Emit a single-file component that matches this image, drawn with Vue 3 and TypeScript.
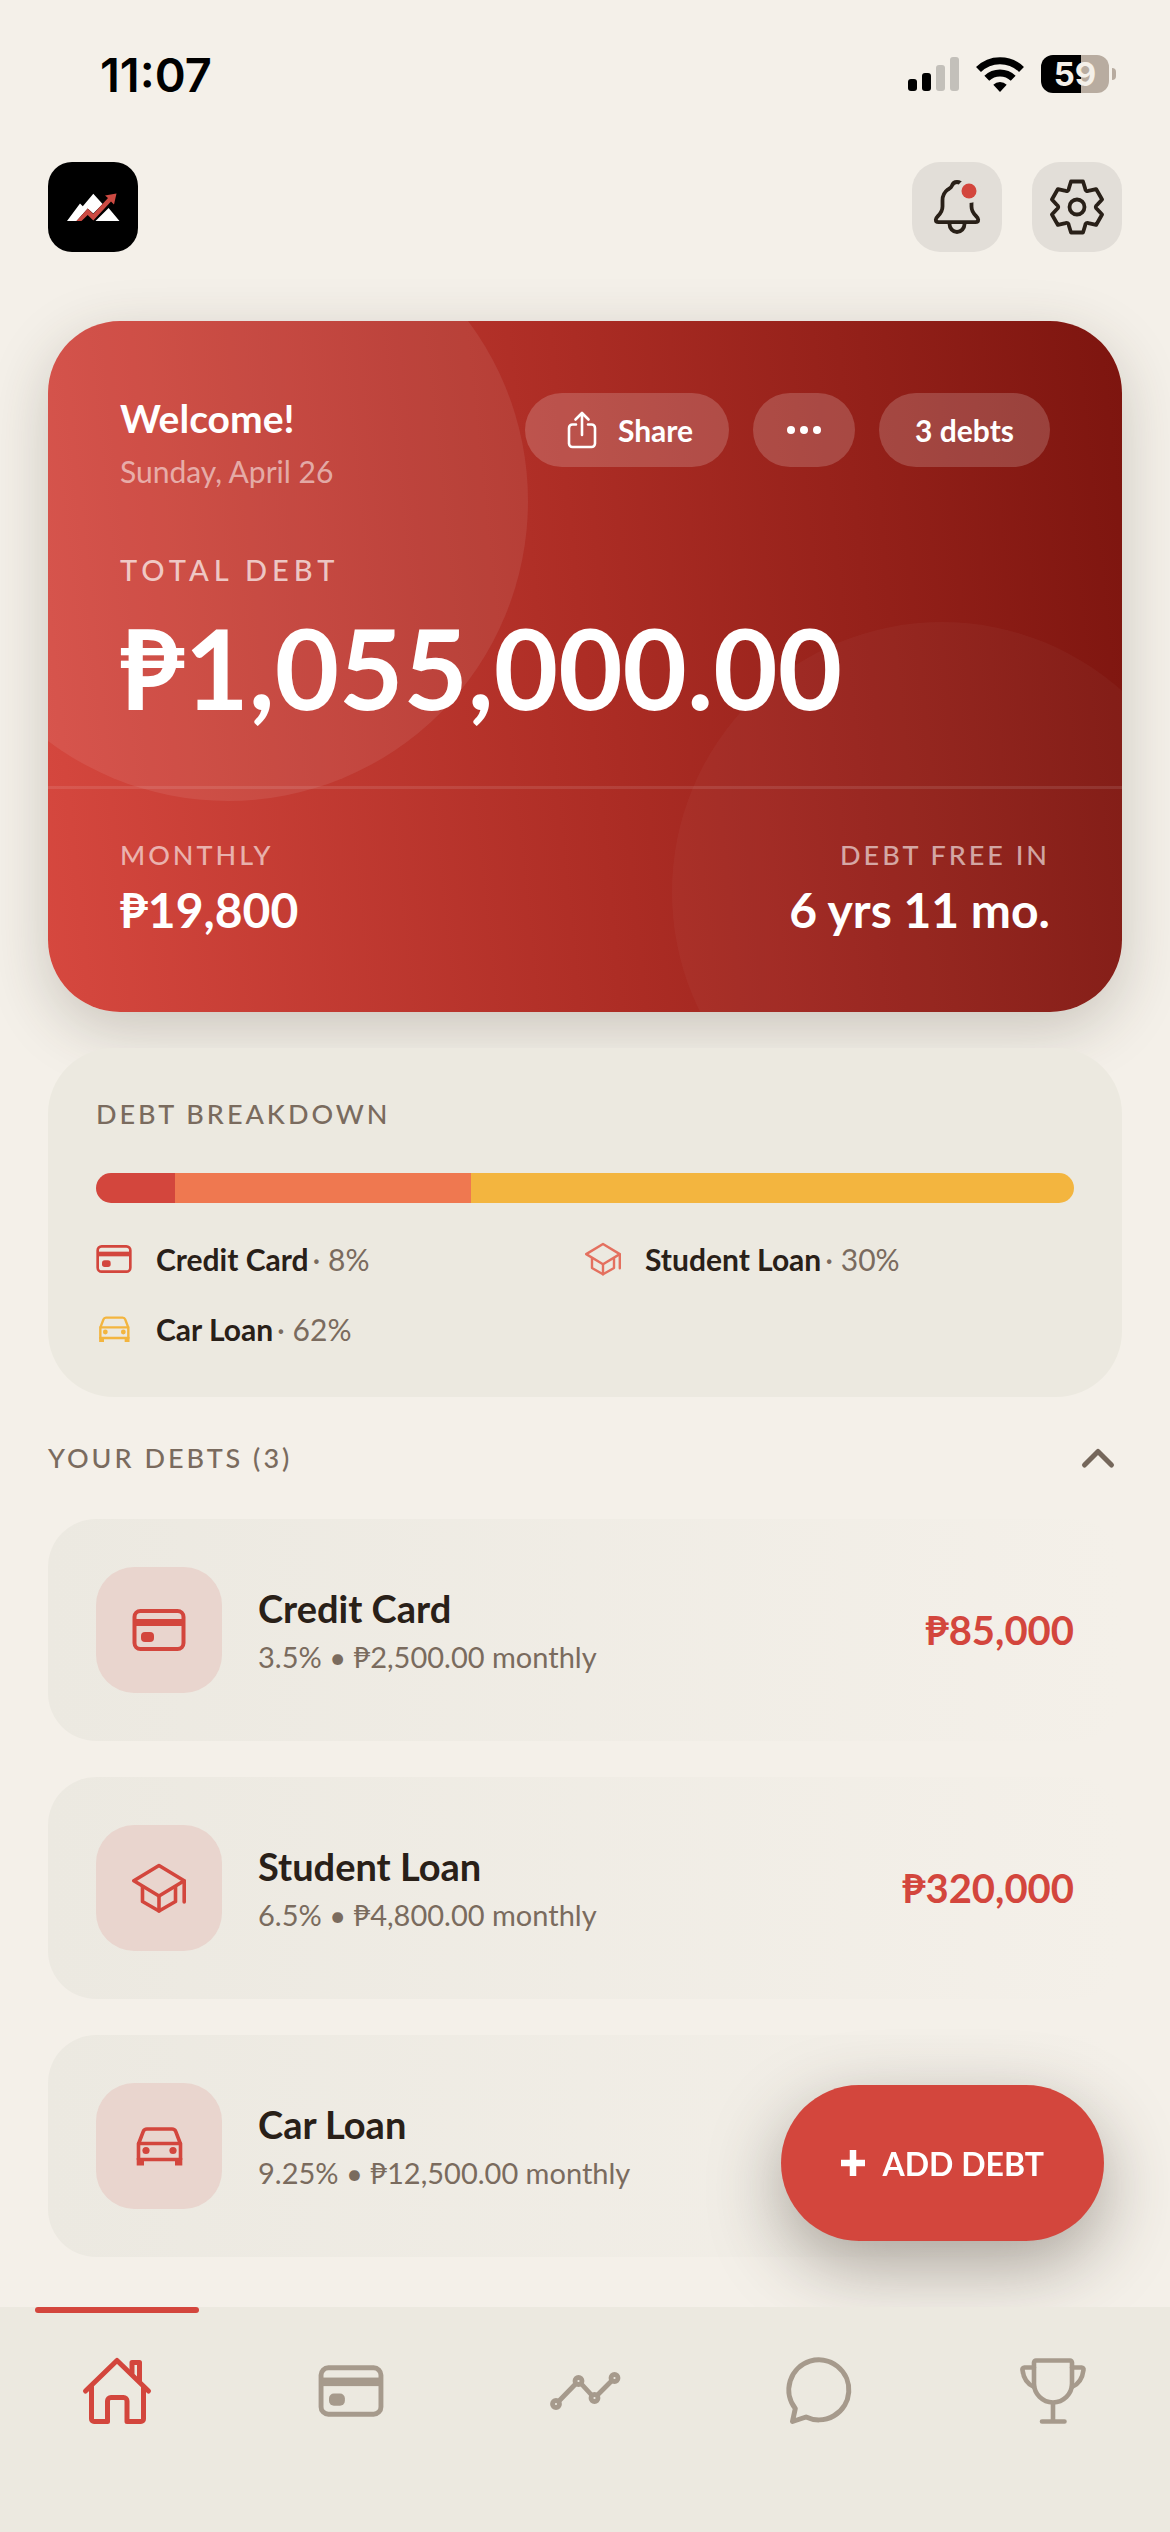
<script setup lang="ts">
import { ref } from 'vue'

interface Debt {
  name: string
  icon: string
  terms: string
  balance?: string
  amount: number
  share: string
  bar: string
  tint: string
}

const debts: Debt[] = [
  { name: 'Credit Card', icon: 'card', terms: '3.5% • ₱2,500.00 monthly', balance: '₱85,000', amount: 85000, share: '8%', bar: '#d3463d', tint: '#d3463d' },
  { name: 'Student Loan', icon: 'cap', terms: '6.5% • ₱4,800.00 monthly', balance: '₱320,000', amount: 320000, share: '30%', bar: '#ef7850', tint: '#e4705f' },
  { name: 'Car Loan', icon: 'car', terms: '9.25% • ₱12,500.00 monthly', amount: 650000, share: '62%', bar: '#f3b53f', tint: '#f3b53f' },
]

const total = debts.reduce((sum, d) => sum + d.amount, 0)

const tabs = [
  { id: 'home', label: 'Home' },
  { id: 'card', label: 'Debts' },
  { id: 'trend', label: 'Progress' },
  { id: 'chat', label: 'Chat' },
  { id: 'trophy', label: 'Achievements' },
]
const activeTab = ref('home')
const expanded = ref(true)

// Six-toothed cog, one tooth every 60 degrees around (30, 30)
function cogPath(): string {
  const tooth: [number, number][] = [[-8, -19], [-6, -25.5], [6, -25.5], [8, -19]]
  const at = (x: number, y: number, turn: number) => {
    const a = (turn * Math.PI) / 180
    const px = 30 + x * Math.cos(a) - y * Math.sin(a)
    const py = 30 + x * Math.sin(a) + y * Math.cos(a)
    return `${px.toFixed(2)} ${py.toFixed(2)}`
  }
  let d = ''
  for (let i = 0; i < 6; i++) {
    const turn = i * 60
    d += `${i ? 'L' : 'M'}${at(...tooth[0], turn)}L${at(...tooth[1], turn)}L${at(...tooth[2], turn)}L${at(...tooth[3], turn)}`
    d += `Q${at(0, -17, turn + 30)} ${at(...tooth[0], turn + 60)}`
  }
  return d + 'Z'
}
const cog = cogPath()
</script>

<template>
  <div class="app">
    <svg class="sprite" aria-hidden="true">
      <symbol id="i-card" viewBox="0 0 54 54">
        <rect x="2.5" y="8" width="49" height="38" rx="6" fill="none" stroke="currentColor" stroke-width="4" />
        <rect x="2.5" y="16" width="49" height="7" fill="currentColor" />
        <rect x="9" y="29" width="13" height="10" rx="4" fill="currentColor" />
      </symbol>
      <symbol id="i-cap" viewBox="0 0 54 54">
        <g fill="none" stroke="currentColor" stroke-width="3.6" stroke-linejoin="round" stroke-linecap="round">
          <path d="M27 4.5 1.8 19.7 27 35 52.2 19.7Z" />
          <path d="M10.5 26V40.5L27 50 43.5 40.5V26" />
          <path d="M27 35V50M52.2 20V41" />
        </g>
      </symbol>
      <symbol id="i-car" viewBox="0 0 54 54">
        <g fill="none" stroke="currentColor" stroke-width="3.6" stroke-linejoin="round">
          <path d="M6.5 25 11.2 12.6Q12.2 10 15 10H40Q42.8 10 43.8 12.6L48.5 25" />
          <path d="M6.5 24.5H48.5V40.5H6.5Z" />
        </g>
        <path d="M4.7 39H12V46.5H4.7ZM43 39H50.3V46.5H43Z" fill="currentColor" />
        <circle cx="14" cy="31.5" r="3.6" fill="currentColor" />
        <circle cx="41" cy="31.5" r="3.6" fill="currentColor" />
      </symbol>
      <symbol id="i-home" viewBox="0 0 72 72">
        <g fill="none" stroke="currentColor" stroke-width="5" stroke-linejoin="round" stroke-linecap="round">
          <path d="M4.5 36 36 5.5 67.5 36" />
          <path d="M10.5 32V64a2.5 2.5 0 0 0 2.5 2.5H26.5V46a3.5 3.5 0 0 1 3.5-3.5H42.5a3.5 3.5 0 0 1 3.5 3.5V66.5H60a2.5 2.5 0 0 0 2.5-2.5V32" />
          <path d="M51 18V7.5H58.5V26" />
        </g>
      </symbol>
      <symbol id="i-trend" viewBox="0 0 72 72">
        <g fill="none" stroke="currentColor" stroke-width="4.8">
          <path d="M9.5 46.5 27 28.5M32 28.5 43 40.5M48 40.5 63 25.5" />
          <circle cx="7" cy="49" r="3.5" />
          <circle cx="29.5" cy="26" r="3.5" />
          <circle cx="45.5" cy="43" r="3.5" />
          <circle cx="65.5" cy="23" r="3.5" />
        </g>
      </symbol>
      <symbol id="i-chat" viewBox="0 0 72 72">
        <path d="M12.3 53.5A30 30 0 1 1 23 62L9.5 66.5Z" fill="none" stroke="currentColor" stroke-width="5" stroke-linejoin="round" />
      </symbol>
      <symbol id="i-trophy" viewBox="0 0 72 72">
        <g fill="none" stroke="currentColor" stroke-width="4.6" stroke-linejoin="round" stroke-linecap="round">
          <path d="M17 7.5a2 2 0 0 1 2-2H53a2 2 0 0 1 2 2V28.5a19 19 0 0 1-38 0Z" />
          <path d="M17 12.5H7.5a2 2 0 0 0-2 2.5C6.5 23 10 29 17 32" />
          <path d="M55 12.5H64.5a2 2 0 0 1 2 2.5C65.5 23 62 29 55 32" />
          <path d="M36 48V66M25 66.5H47.5" />
        </g>
      </symbol>
    </svg>

    <div class="status">
      <span class="clock">11:07</span>
      <div class="indicators">
        <svg class="signal" viewBox="0 0 51 34" aria-label="Signal">
          <rect x="0" y="22" width="9" height="12" rx="3" />
          <rect x="14" y="16" width="9" height="18" rx="3" />
          <rect x="28" y="8" width="9" height="26" rx="3" opacity=".2" />
          <rect x="42" y="0" width="9" height="34" rx="3" opacity=".2" />
        </svg>
        <svg class="wifi" viewBox="0 0 48 36" aria-label="Wi-Fi">
          <g fill="none" stroke="#000" stroke-width="7">
            <path d="M2.5 13.5A30.5 30.5 0 0 1 45.5 13.5" />
            <path d="M10.8 22.3A19 19 0 0 1 37.2 22.3" />
          </g>
          <path d="M24 36 17.3 28.8A9.5 9.5 0 0 1 30.7 28.8Z" />
        </svg>
        <div class="battery"><span class="cell">59</span><i class="nub"></i></div>
      </div>
    </div>

    <header class="topbar">
      <a class="logo" href="#home" aria-label="Home">
        <svg viewBox="0 0 90 90">
          <path fill="#fff" d="M19 59 32 41.5 34.8 44.3 45.3 31.7 54.6 42 45.3 51.5 39.7 46.5 28.5 59ZM47.5 59 60.6 46 71.5 59Z" />
          <path fill="#cc4a42" d="M28.5 59 39.7 46.5 45.3 52 60 36 57 33.5 68.5 31.5 66 42.5 63 39.5 45.3 58.5 39.7 53 33.5 59Z" />
        </svg>
      </a>
      <div class="tools">
        <button class="tool" type="button" aria-label="Notifications">
          <svg viewBox="0 0 60 60" fill="none" stroke="currentColor" stroke-width="3.8" stroke-linejoin="round">
            <path d="M30 5c-2.5 0-4.3 1.2-5.2 4-.5 1.6-2.3 2.4-4 3.6-3.6 2.7-5.3 6.5-5.3 10.9v6c0 3.6-1.5 6.4-4.4 9.4-1.5 1.6-2.3 2.5-2.3 3.6 0 1.8 1 2.7 2.8 2.7h36.8c1.8 0 2.8-.9 2.8-2.7 0-1.1-.8-2-2.3-3.6-2.9-3-4.4-5.8-4.4-9.4v-6c0-4.4-1.7-8.2-5.3-10.9-1.7-1.2-3.5-2-4-3.6-.9-2.8-2.7-4-5.2-4z" />
            <path d="M22.5 45.5v1.5a7.5 8 0 0 0 15 0v-1.5" />
            <circle cx="42" cy="14" r="12" fill="#e2ded8" stroke="none" />
            <circle cx="42" cy="14" r="7.5" fill="#d3463d" stroke="none" />
          </svg>
        </button>
        <button class="tool" type="button" aria-label="Settings">
          <svg viewBox="0 0 60 60" fill="none" stroke="currentColor" stroke-width="3.8" stroke-linejoin="round">
            <path :d="cog" />
            <circle cx="30" cy="30" r="7.5" />
          </svg>
        </button>
      </div>
    </header>

    <main class="content">
      <section class="hero">
        <div class="hero-main">
          <div class="hero-top">
            <div>
              <h1 class="welcome">Welcome!</h1>
              <p class="date">Sunday, April 26</p>
            </div>
            <div class="pills">
              <button class="pill" type="button">
                <svg class="share-icon" viewBox="0 0 42 42" fill="none" stroke="currentColor" stroke-width="2.6" stroke-linecap="round" stroke-linejoin="round">
                  <path d="M15 15.5H11.5a3.5 3.5 0 0 0-3.5 3.5V34.5a3.5 3.5 0 0 0 3.5 3.5H30.5a3.5 3.5 0 0 0 3.5-3.5V19a3.5 3.5 0 0 0-3.5-3.5H27" />
                  <path d="M21 26V4M14.5 10.5 21 4 27.5 10.5" />
                </svg>
                Share
              </button>
              <button class="pill more" type="button" aria-label="More"><i></i><i></i><i></i></button>
              <button class="pill" type="button">3 debts</button>
            </div>
          </div>
          <p class="total-label">TOTAL DEBT</p>
          <p class="total">₱1,055,000.00</p>
        </div>
        <div class="hero-foot">
          <div>
            <p class="stat-label">MONTHLY</p>
            <p class="stat">₱19,800</p>
          </div>
          <div class="end">
            <p class="stat-label">DEBT FREE IN</p>
            <p class="stat">6 yrs 11 mo.</p>
          </div>
        </div>
      </section>

      <section class="breakdown">
        <h2 class="caption">DEBT BREAKDOWN</h2>
        <div class="bar">
          <span v-for="d in debts" :key="d.name" :style="{ width: (d.amount / total) * 100 + '%', background: d.bar }"></span>
        </div>
        <ul class="legend">
          <li v-for="d in debts" :key="d.name">
            <svg class="legend-icon" :style="{ color: d.tint }"><use :href="'#i-' + d.icon" /></svg>
            <p class="legend-text">
              <strong>{{ d.name }}</strong>
              <span>· {{ d.share }}</span>
            </p>
          </li>
        </ul>
      </section>

      <section class="debts">
        <div class="debts-head">
          <h2 class="caption">YOUR DEBTS ({{ debts.length }})</h2>
          <button class="toggle" type="button" aria-label="Toggle list" :aria-expanded="expanded" @click="expanded = !expanded">
            <svg viewBox="0 0 48 48" fill="none" stroke="currentColor" stroke-width="5" stroke-linecap="round" stroke-linejoin="round">
              <path d="M10.5 31 24 17.5 37.5 31" />
            </svg>
          </button>
        </div>
        <ul v-if="expanded" class="list">
          <li v-for="d in debts" :key="d.name" class="debt">
            <span class="tile"><svg><use :href="'#i-' + d.icon" /></svg></span>
            <div class="info">
              <h3>{{ d.name }}</h3>
              <p>{{ d.terms }}</p>
            </div>
            <span v-if="d.balance" class="balance">{{ d.balance }}</span>
          </li>
        </ul>
      </section>
    </main>

    <button class="fab" type="button">
      <svg viewBox="0 0 24 26" aria-hidden="true"><path d="M12 0V26M0 13H24" stroke="currentColor" stroke-width="6.5" /></svg>
      ADD DEBT
    </button>

    <nav class="tabs">
      <a v-for="t in tabs" :key="t.id" class="tab" :class="[t.id, { active: t.id === activeTab }]" :href="'#' + t.id" :aria-label="t.label" @click="activeTab = t.id">
        <svg><use :href="'#i-' + t.id" /></svg>
      </a>
    </nav>
  </div>
</template>

<style>
body {
  margin: 0;
  background: #f4f0e9;
}
</style>

<style scoped>
.app {
  min-height: 100vh;
  display: flex;
  flex-direction: column;
  background: #f4f0e9;
  color: #292018;
  font-family: Lato, "Noto Sans", sans-serif;
}
h1, h2, h3, p, ul {
  margin: 0;
  padding: 0;
  font-weight: 400;
}
ul {
  list-style: none;
}
button {
  border: 0;
  padding: 0;
  font: inherit;
  color: inherit;
  cursor: pointer;
}
svg {
  display: block;
}
.sprite {
  position: absolute;
  width: 0;
  height: 0;
}

.status {
  display: flex;
  justify-content: space-between;
  align-items: center;
  height: 148px;
  padding: 0 54px 0 100px;
  color: #000;
  font-family: Inter, sans-serif;
  font-weight: 600;
}
.clock {
  font-size: 47px;
}
.indicators {
  display: flex;
  align-items: center;
  gap: 17px;
}
.signal {
  width: 51px;
  height: 34px;
}
.wifi {
  width: 48px;
  height: 36px;
}
.battery {
  display: flex;
  align-items: center;
  gap: 3px;
}
.cell {
  width: 68px;
  height: 38px;
  border-radius: 12px;
  background: linear-gradient(90deg, #000 59%, #b8aca0 59%);
  color: #f4f0e9;
  font-size: 33px;
  line-height: 38px;
  font-weight: 700;
  text-align: center;
}
.nub {
  width: 4px;
  height: 12px;
  border-radius: 0 4px 4px 0;
  background: #b8aca0;
}

.topbar {
  display: flex;
  justify-content: space-between;
  padding: 14px 48px 21px;
}
.logo {
  width: 90px;
  height: 90px;
  border-radius: 24px;
  background: #000;
}
.tools {
  display: flex;
  gap: 30px;
}
.tool {
  display: grid;
  place-items: center;
  width: 90px;
  height: 90px;
  border-radius: 28px;
  background: #e2ded8;
}
.tool svg {
  width: 60px;
  height: 60px;
}

.content {
  display: flex;
  flex-direction: column;
  flex: 1;
  gap: 36px;
  padding: 48px 48px 50px;
  overflow: hidden;
}

.hero {
  position: relative;
  border-radius: 72px;
  background: linear-gradient(84deg, #d6483f 0%, #ad2d25 50%, #7d150f 100%);
  box-shadow: 0 18px 60px rgba(60, 50, 35, 0.22);
  color: #fff;
  overflow: hidden;
}
.hero::before,
.hero::after {
  content: "";
  position: absolute;
  border-radius: 50%;
}
.hero::before {
  left: -120px;
  top: -120px;
  width: 600px;
  height: 600px;
  background: rgba(255, 255, 255, 0.08);
}
.hero::after {
  right: -90px;
  bottom: -150px;
  width: 540px;
  height: 540px;
  background: rgba(255, 255, 255, 0.03);
}
.hero-main,
.hero-foot {
  position: relative;
  z-index: 1;
  padding: 72px;
}
.hero-main {
  padding-bottom: 54px;
  border-bottom: 3px solid rgba(255, 255, 255, 0.1);
}
.hero-top {
  display: flex;
  justify-content: space-between;
  align-items: flex-start;
}
.welcome {
  font-size: 39px;
  line-height: 50px;
  font-weight: 700;
}
.date {
  margin-top: 10px;
  font-size: 30px;
  line-height: 36px;
  color: rgba(255, 255, 255, 0.55);
}
.pills {
  display: flex;
  gap: 24px;
}
.pill {
  display: flex;
  align-items: center;
  gap: 15px;
  height: 74px;
  padding: 0 36px;
  border-radius: 37px;
  background: rgba(255, 255, 255, 0.18);
  font-size: 30px;
  font-weight: 700;
}
.share-icon {
  width: 42px;
  height: 42px;
}
.more {
  gap: 5px;
  padding: 0 34px;
}
.more i {
  width: 8px;
  height: 8px;
  border-radius: 50%;
  background: #fff;
}
.total-label {
  margin-top: 63px;
  font-size: 29px;
  line-height: 36px;
  font-weight: 500;
  letter-spacing: 5px;
  color: rgba(255, 255, 255, 0.7);
}
.total {
  margin-top: 14px;
  font-size: 111px;
  line-height: 130px;
  font-weight: 700;
}
.hero-foot {
  display: flex;
  justify-content: space-between;
  padding-top: 49px;
}
.end {
  text-align: right;
}
.stat-label {
  font-size: 27px;
  line-height: 34px;
  font-weight: 500;
  letter-spacing: 3px;
  color: rgba(255, 255, 255, 0.6);
}
.stat {
  margin-top: 8px;
  font-size: 48px;
  line-height: 60px;
  font-weight: 700;
}

.breakdown {
  position: relative;
  padding: 48px;
  border-radius: 66px;
  background: #ece9e0;
}
.caption {
  font-size: 27px;
  line-height: 36px;
  font-weight: 500;
  letter-spacing: 3px;
  color: #7a6b5e;
}
.bar {
  display: flex;
  height: 30px;
  margin-top: 41px;
  border-radius: 15px;
  overflow: hidden;
}
.legend {
  display: grid;
  grid-template-columns: 1fr 1fr;
  row-gap: 30px;
  margin-top: 36px;
  color: #7a6b5e;
  font-size: 30px;
  line-height: 40px;
}
.legend li {
  display: flex;
  align-items: center;
  gap: 24px;
}
.legend-text {
  display: flex;
  gap: 4px;
}
.legend strong {
  color: #292018;
  font-weight: 700;
}
.legend-icon {
  width: 36px;
  height: 36px;
}

.debts-head {
  display: flex;
  justify-content: space-between;
  align-items: center;
  height: 50px;
}
.toggle {
  background: none;
  color: #75675b;
}
.toggle svg {
  width: 48px;
  height: 48px;
}
.list {
  display: flex;
  flex-direction: column;
  gap: 36px;
  margin-top: 36px;
}
.debt {
  display: flex;
  align-items: center;
  gap: 36px;
  padding: 48px;
  border-radius: 48px;
  background: linear-gradient(90deg, #ece9e1, #f4f0e9);
}
.tile {
  display: grid;
  place-items: center;
  width: 126px;
  height: 126px;
  border-radius: 38px;
  background: #e9d5ce;
  color: #d3463d;
}
.tile svg {
  width: 54px;
  height: 54px;
}
.info {
  flex: 1;
}
.info h3 {
  font-size: 38px;
  line-height: 50px;
  font-weight: 700;
}
.info p {
  margin-top: 4px;
  font-size: 29px;
  line-height: 40px;
  color: #7a6b5e;
}
.balance {
  color: #d3463d;
  font-size: 40px;
  line-height: 46px;
  font-weight: 700;
}

.fab {
  position: fixed;
  right: 66px;
  bottom: 291px;
  z-index: 1;
  display: flex;
  align-items: center;
  gap: 18px;
  height: 156px;
  padding: 0 60px;
  border-radius: 78px;
  background: #d3463d;
  box-shadow: 0 24px 72px rgba(60, 50, 40, 0.4);
  color: #fff;
  font-size: 32px;
  font-weight: 700;
}
.fab svg {
  width: 24px;
  height: 26px;
}

.tabs {
  position: sticky;
  bottom: 0;
  z-index: 2;
  display: flex;
  height: 225px;
  background: #ece9e0;
}
.tab {
  position: relative;
  flex: 1;
  display: flex;
  justify-content: center;
  padding-top: 48px;
  color: #a69a8c;
}
.tab svg {
  width: 72px;
  height: 72px;
}
.tab.card svg {
  width: 66px;
}
.tab.active {
  color: #d3463d;
}
.tab.active::before {
  content: "";
  position: absolute;
  top: 0;
  left: 15%;
  right: 15%;
  height: 6px;
  border-radius: 3px;
  background: #d3463d;
}
</style>
